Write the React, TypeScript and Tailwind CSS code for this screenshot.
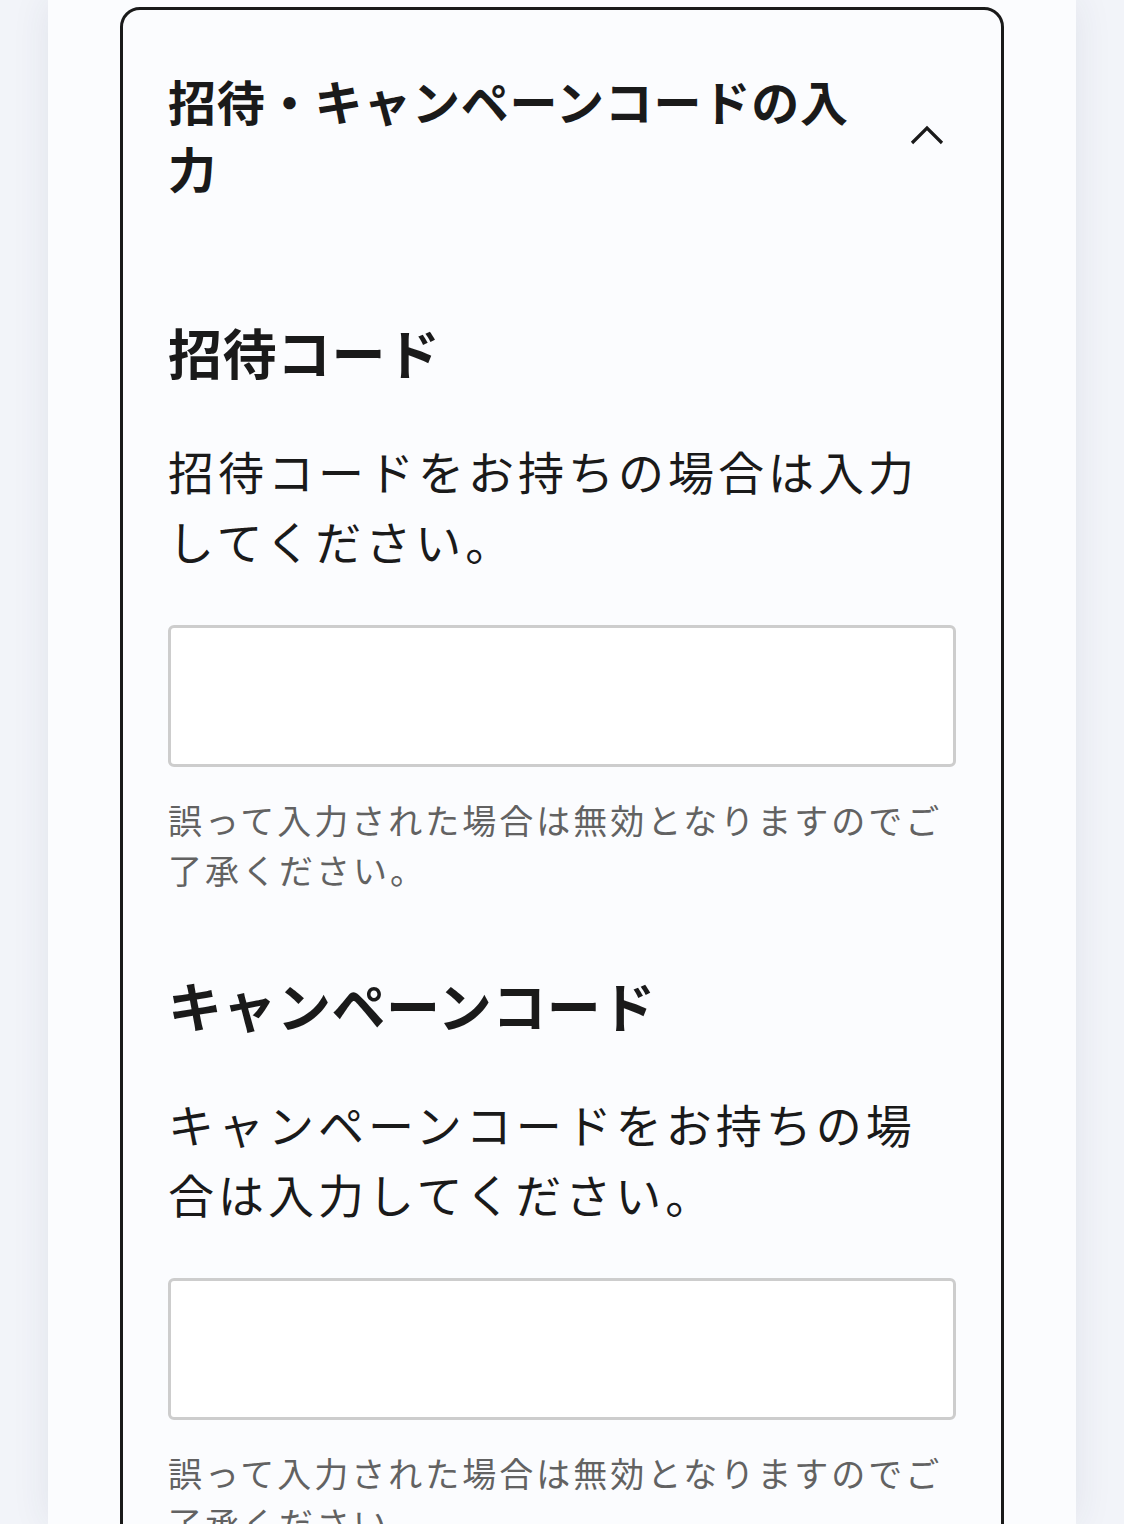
import React from 'react'

const font = { fontFamily: '"Noto Sans CJK JP", "Noto Sans", sans-serif' }

interface CodeFieldProps {
  title: string
  description: string
  note: string
}

function CodeField({ title, description, note }: CodeFieldProps) {
  return (
    <section>
      <h3 className="text-[54px] leading-[70px] font-bold tracking-[0.5px] text-[#1a1a1a]">
        {title}
      </h3>
      <p className="mt-[48px] text-[46px] leading-[70px] tracking-[4px] text-[#1a1a1a]">
        {description}
      </p>
      <input
        type="text"
        className="mt-[50px] block w-full h-[142px] rounded-[6px] border-[3px] border-[#cdcdcd] bg-white px-4 text-[40px] outline-none"
      />
      <p className="mt-[28px] text-[34px] leading-[50px] tracking-[3px] text-[#626262]">
        {note}
      </p>
    </section>
  )
}

export default function App() {
  return (
    <div className="h-[1524px] overflow-hidden bg-[#f2f4f9]" style={font}>
      <div className="mx-auto h-full w-[1028px] bg-[#fbfcfe] px-[72px] pt-[7px] shadow-[0_0_36px_rgba(40,50,90,0.09)]">
        <div className="rounded-[20px] border-[3px] border-[#1a1a1a] bg-[#fbfcfe] px-[45px] pt-[57px] pb-[80px]">
          <button className="flex w-full items-center gap-[42px] text-left">
            <h2 className="w-[700px] text-[48px] leading-[67px] font-bold tracking-[0.8px] text-[#1a1a1a]">
              招待・キャンペーンコードの入力
            </h2>
            <span className="flex w-[46px] justify-start">
              <svg width="34" height="21" viewBox="0 0 34 21" fill="none">
                <path d="M2 19 L17 4 L32 19" stroke="#1a1a1a" strokeWidth="3.2" />
              </svg>
            </span>
          </button>

          <div className="mt-[116px] flex flex-col gap-[75px]">
            <CodeField
              title="招待コード"
              description="招待コードをお持ちの場合は入力してください。"
              note="誤って入力された場合は無効となりますのでご了承ください。"
            />
            <CodeField
              title="キャンペーンコード"
              description="キャンペーンコードをお持ちの場合は入力してください。"
              note="誤って入力された場合は無効となりますのでご了承ください。"
            />
          </div>
        </div>
      </div>
    </div>
  )
}
